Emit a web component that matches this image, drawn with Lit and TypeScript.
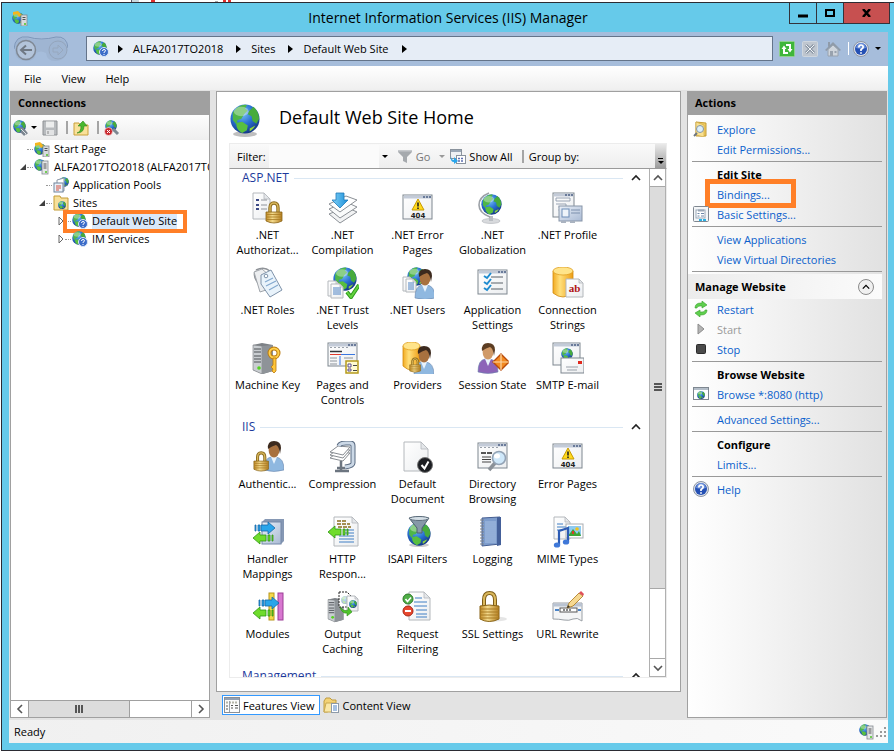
import { LitElement, html, svg, css, nothing } from "lit";
import { customElement } from "lit/decorators.js";

/* ---------- shared drawing parts ---------- */
const globe = (x: number, y: number, s: number) => svg`
  <g transform="translate(${x} ${y}) scale(${s / 32})">
    <circle cx="16" cy="16" r="15.5" fill="url(#sea)"/>
    <path d="M3 9C7 3 13 0 18 1l-2 4 3 2-4 4-3 5-4 1-1 5-4-5z" fill="#4fb648"/>
    <path d="M20 8l5-5c4 3 6 8 6 13l-3 5-4-3-1-5-4-2z" fill="#46ab3c"/>
    <path d="M7 20l6-1 6 4-1 5-5 3C9 29 6 25 7 20z" fill="#58bf3f"/>
    <path d="M21 26l6-3c-2 4-4 5-6 6z" fill="#8fd43c"/>
    <ellipse cx="12" cy="8" rx="8" ry="5" fill="#fff" opacity=".35"/>
  </g>`;
const lock = (x: number, y: number, s: number) => svg`
  <g transform="translate(${x} ${y}) scale(${s / 22})">
    <path d="M5 11V6q0-5 4-5t4 5v5" fill="none" stroke="#8a6a1c" stroke-width="3.4"/>
    <path d="M5 11V6q0-5 4-5t4 5v5" fill="none" stroke="#d9b75c" stroke-width="1.4"/>
    <path d="M1 10h16v9q-8 4-16 0z" fill="url(#brass)" stroke="#8a6518" stroke-width=".8"/>
    <path d="M2 12.500h14M2 15h14M2 17.500h14" stroke="#a87b22" stroke-width=".8"/>
  </g>`;
const person = (x: number, y: number, body = "#8fb8e0", hair = "#3c2a1e", skin = "#a8713f") => svg`
  <g transform="translate(${x} ${y})">
    <path d="M0 29q0-12 7-13h5q8 1 8 13-10 3-20 0z" fill="${body}" stroke="#6b86ac" stroke-width=".6"/>
    <path d="M7 16l3 7 3-7z" fill="#e9f3fc"/>
    <ellipse cx="10" cy="9" rx="5.400" ry="7.500" fill="${skin}"/>
    <path d="M4 8Q3 0 10 0t7 7l-1 6q-1-8-4-9-4 1-8 4z" fill="${hair}"/>
  </g>`;
const page = (x: number, y: number, w: number, h: number, f = 6) => svg`
  <path d="M${x} ${y}h${w - f}l${f} ${f}v${h - f}h${-w}z" fill="url(#paper)" stroke="#b4b8bc" stroke-width="1"/>
  <path d="M${x + w - f} ${y}v${f}h${f}z" fill="#e4e7ea" stroke="#b4b8bc" stroke-width=".8"/>`;
const win = (x: number, y: number, w: number, h: number) => svg`
  <rect x="${x}" y="${y}" width="${w}" height="${h}" fill="url(#paper)" stroke="#7e8790"/>
  <path d="M${x + 1} ${y + 2}h${w - 2}" stroke="#c3cbd8" stroke-width="3"/>
  <path d="M${x + w - 9} ${y + 2}h8" stroke="#4d6285" stroke-width="1.500" stroke-dasharray="2 1"/>`;
const lines = (x: number, y: number, w: number, n: number, gap: number, c: string) =>
  Array.from({ length: n }, (_, i) => svg`<path d="M${x} ${y + i * gap}h${w}" stroke="${c}" stroke-width="1"/>`);
const server = (x: number, y: number, s: number) => svg`
  <g transform="translate(${x} ${y}) scale(${s / 31})">
    <path d="M0 2l9-2 11 2v26l-10 3-10-4z" fill="#7d8186"/>
    <path d="M0 2l9 1v28l-9-4z" fill="#c9cdd1" stroke="#73777c" stroke-width=".6"/>
    <path d="M9 3l11-1v26l-11 3z" fill="#8e9398"/>
    <path d="M1 6h7M1 9h7M1 13h7M1 16h7M1 19h7" stroke="#4c5055" stroke-width="1.200"/>
    <circle cx="6" cy="25" r="1.800" fill="#55d321"/>
  </g>`;
const cylinder = (x: number, y: number, w: number, h: number) => svg`
  <path d="M${x} ${y + 4}v${h - 8}q${w / 2} 8 ${w} 0v${8 - h}z" fill="url(#gold)" stroke="#d08a10" stroke-width=".8"/>
  <ellipse cx="${x + w / 2}" cy="${y + 4}" rx="${w / 2}" ry="4" fill="#ffe48a" stroke="#dfa021" stroke-width=".8"/>`;
const arrowR = (x: number, y: number) => svg`
  <path d="M${x} ${y + 3}h1v6h-1zM${x + 3} ${y + 3}h2v6h-2zM${x + 6} ${y + 3}h7V${y}l7 6-7 6v-3h-7z" fill="#2aa5ea" stroke="#1668a8" stroke-width=".8"/>`;
const arrowL = (x: number, y: number) => svg`
  <path d="M${x + 19} ${y + 3}h1v6h-1zM${x + 15} ${y + 3}h2v6h-2zM${x + 13} ${y + 3}H${x + 7}V${y}l-7 6 7 6v-3h6z" fill="#6fdc2c" stroke="#2f9614" stroke-width=".8"/>`;
const error404 = svg`
  ${win(1, 3, 29, 24)}
  <path d="M16 7l6 11H10z" fill="#ffd91c" stroke="#c79a00"/>
  <path d="M16 10.500v4M16 15.500v1.500" stroke="#222" stroke-width="1.600"/>
  <text x="16" y="26" font-size="7" font-weight="bold" font-family="'DejaVu Sans', sans-serif" text-anchor="middle" fill="#222">404</text>`;

/* ---------- 32px feature icons ---------- */
const features: Record<string, unknown> = {
  authz: svg`${page(1, 1, 17, 26)}
    <path d="M4 8h3M4 13h3M4 17h3" stroke="#3c4a86" stroke-width="2"/><path d="M9 8h6M9 13h6M9 17h6" stroke="#8f949b"/>
    ${lock(13, 10, 22)}`,
  compilation: svg`
    <path d="M2 22l17-7 11 5-17 11z" fill="#f2f3f4" stroke="#8b9096"/>
    <path d="M2 17l17-7 11 5-17 11z" fill="#fafbfb" stroke="#8b9096"/>
    <path d="M2 12l17-8 11 4-17 12z" fill="#fff" stroke="#8b9096"/>
    <path d="M9 1h8v7h4l-8 8-8-8h4z" fill="url(#azure)" stroke="#1f78b8" stroke-width=".8"/>`,
  error404,
  globalization: svg`
    <ellipse cx="14" cy="29" rx="9" ry="2.500" fill="#d8dadd" stroke="#aeb2b7" stroke-width=".6"/>
    <path d="M12 24h4v5h-4z" fill="#b9bdc2"/>
    <path d="M12 1Q2 5 2 13t11 12" fill="none" stroke="#9ba0a6" stroke-width="1.600"/>
    ${globe(4, 2, 21)}`,
  profile: svg`${win(1, 1, 21, 24)}
    <path d="M4 6h14v3H4zM4 12h10v12" fill="none" stroke="#98a3b3"/><path d="M6 15h6M6 18h4" stroke="#c0c7d0"/>
    <rect x="7" y="14" width="23" height="15" fill="url(#steel)" stroke="#8895a8"/>
    <rect x="10" y="17" width="7" height="8" fill="#eef4fa" stroke="#6c8db8"/>
    <path d="M19 18h9M19 21h9" stroke="#7d90ad"/><path d="M9 30h5M18 30h5" stroke="#aab3c0" stroke-width="2"/>`,
  roles: svg`
    <path d="M4 3q8-4 14 1M4 4q-4 4 2 12" fill="none" stroke="#8f9398" stroke-width="1.500"/>
    <path d="M2 5l8-3 7 6-3 15-6 2z" fill="#eceef0" stroke="#a0a5ab"/>
    <path d="M9 8l10-5 11 20-12 7-9-13z" fill="#e9f3fb" stroke="#7f93aa"/>
    <circle cx="14" cy="9" r="1.800" fill="#fff" stroke="#7f93aa"/>
    <path d="M13 15l8-4M14 19l10-5M17 23l9-5" stroke="#84a9cf" stroke-width="1.200"/>`,
  trust: svg`${globe(6, 0, 24)}${page(1, 14, 11, 15, 3)}${page(4, 17, 12, 14, 3)}
    ${lines(6, 21, 8, 4, 2, "#4c82c4")}
    <path d="M20 25l4 5 8-12" fill="none" stroke="#2c9a1b" stroke-width="4"/><path d="M20 25l4 5 8-12" fill="none" stroke="#64d23f" stroke-width="2"/>`,
  users: svg`${globe(5, 0, 19)}${page(1, 10, 10, 14, 3)}${page(4, 12, 10, 13, 3)}
    ${lines(6, 16, 6, 4, 2, "#4c82c4")}${person(13, 2)}`,
  appsettings: svg`${win(1, 3, 29, 24)}
    ${[9, 15, 21].map((y) => svg`<path d="M7 ${y}l3 2 4-5" fill="none" stroke="#1d8bd0" stroke-width="2"/><path d="M14 ${y + 1}h12" stroke="#596069"/>`)}`,
  connstrings: svg`${cylinder(1, 0, 20, 30)}${page(14, 12, 17, 18, 4)}
    <text x="22.500" y="25" font-size="11" font-weight="bold" font-family="'Liberation Serif', serif" text-anchor="middle" fill="#b01212">ab</text>`,
  machinekey: svg`${server(1, 1, 31)}
    <circle cx="22" cy="11" r="4.500" fill="none" stroke="#b97a10" stroke-width="4"/><circle cx="22" cy="11" r="4.500" fill="none" stroke="#ffcf4a" stroke-width="2"/>
    <path d="M21 16h3v13l-2 2-2-2 1-2-2-2 2-2z" fill="#ffc63a" stroke="#b97a10" stroke-width=".8"/>`,
  pages: svg`${win(1, 1, 29, 23)}
    <path d="M3 5.500h20" stroke="#9aa1aa" stroke-dasharray="2 2"/>
    <path d="M3 9.500h12" stroke="#2f3338" stroke-width="1.500"/><path d="M3 12.500h12" stroke="#e03a2e"/><path d="M14 12.500h14" stroke="#3977e0"/>
    <path d="M3 16h7M3 19h7M3 22h7M17 16h9" stroke="#8d949c"/><path d="M13 14v9" stroke="#3977e0"/>
    <rect x="19" y="19" width="12" height="12" fill="#fffbd0" stroke="#b59a1c" stroke-width="1.500"/>
    <path d="M21 22h3v3h-3zM21 27h3v2h-3z" fill="#fff" stroke="#5b4a8c"/><path d="M26 23.500h4M26 28.500h4" stroke="#444"/>`,
  providers: svg`${cylinder(1, 0, 17, 28)}${person(12, 4)}${lock(7, 16, 15)}`,
  session: svg`${person(1, 1, "#8c63b8", "#5c3d22", "#d09a68")}
    <path d="M24 12l8 8-8 8-8-8z" fill="#f28a22" stroke="#b84a0a" stroke-width="1.400"/>
    <path d="M24 12v16M16 20h16" stroke="#fbd7a8" stroke-width="1.200"/>`,
  smtp: svg`${win(1, 1, 27, 22)}${globe(9, 6, 12)}
    <rect x="9" y="16" width="23" height="15" fill="url(#paper)" stroke="#7e8790"/>
    <path d="M14 25h12M15 28h10" stroke="#9aa1aa"/><rect x="26" y="19" width="4" height="3" fill="#e0281c"/>`,
  authn: svg`${person(12, 0)}${lock(1, 11, 20)}`,
  compression: svg`
    <path d="M3 17l8-6 12 1-7 8z" fill="#fff" stroke="#878c92"/><path d="M3 14l8-6 12 1-7 8z" fill="#fff" stroke="#878c92"/><path d="M3 11l8-6 12 1-7 8z" fill="#fff" stroke="#878c92"/>
    <path d="M12 5q1-3 7-3h4q3 0 3 3v17q0 3-8 4" fill="none" stroke="#596a80" stroke-width="5"/>
    <path d="M12 5q1-3 7-3h4q3 0 3 3v17q0 3-8 4" fill="none" stroke="#cbd8e6" stroke-width="3"/>
    <path d="M14 20v10M8 30h14M10 27h8" stroke="#6c7580" stroke-width="2.500"/>`,
  defaultdoc: svg`${page(2, 1, 24, 29, 7)}
    <circle cx="23" cy="24" r="7.500" fill="#1c1e22" stroke="#777"/><path d="M19.500 24l3 3.500 4-7" fill="none" stroke="#fff" stroke-width="2"/>`,
  directory: svg`${win(1, 2, 29, 25)}
    <path d="M3 6.500h20" stroke="#9aa1aa" stroke-dasharray="2 2"/>
    <path d="M4 12h12" stroke="#222" stroke-width="1.500" stroke-dasharray="5 1"/><path d="M5 16h9M5 18.500h9M5 21h9" stroke="#444"/>
    <path d="M18 22l-6 7" stroke="#8b9198" stroke-width="3.500"/>
    <circle cx="22" cy="17" r="6.500" fill="#cfe8fa" stroke="#93a3b5" stroke-width="1.600"/><ellipse cx="20" cy="15" rx="3" ry="2.500" fill="#fff"/>`,
  handler: svg`
    <path d="M10 6l3-3h19v22l-3 3H10z" fill="#8698b4"/><rect x="10" y="6" width="19" height="22" fill="url(#steel)" stroke="#7588a8"/>
    ${arrowR(3, 6)}${arrowL(1, 16)}`,
  response: svg`${page(7, 1, 24, 29, 6)}
    <path d="M10 5h10M10 8h13M11 11h13" stroke="#8a6d1e" stroke-width="1.500" stroke-dasharray="4 1"/>
    <path d="M18 14h9M18 17h9M12 20h15M12 23h15M12 26h15" stroke="#3f7fc4"/>${arrowL(1, 10)}`,
  isapi: svg`<ellipse cx="17" cy="29" rx="10" ry="2" fill="#000" opacity=".2"/>${globe(5, 6, 24)}
    <path d="M7 2q10-3 20 0l-7 10v5h-5v-5z" fill="#8698a8" stroke="#4f6070"/><ellipse cx="17" cy="2.500" rx="9.500" ry="2" fill="#d5dfe6" stroke="#5d6d7b"/>`,
  logging: svg`
    <path d="M5 2l18-1v27l-18 2z" fill="#7d9ccc" stroke="#465f92"/><path d="M20 1h4v28l-4 1z" fill="#44609a"/>
    ${lines(8, 6, 11, 11, 2, "#a9c1e4")}
    <path d="M3 4h4M3 7h4M3 10h4M3 13h4M3 16h4M3 19h4M3 22h4M3 25h4M3 28h4" stroke="#7c828a" stroke-width="1.200"/>`,
  mime: svg`${page(2, 1, 16, 22, 5)}<path d="M5 8h6M5 11h9M5 14h6" stroke="#3f7fc4"/>
    <rect x="14" y="8" width="17" height="14" fill="#fff" stroke="#a9adb2"/><rect x="16" y="10" width="13" height="10" fill="#8ecbf2"/>
    <path d="M16 20l5-7 4 5 2-3 2 5z" fill="#3fa534"/><circle cx="25" cy="13" r="1.800" fill="#f2c21c"/><path d="M20 15h2v3h-2z" fill="#d83a2a"/>
    <path d="M7 29V15l9-3v14" fill="none" stroke="#2c5bb4" stroke-width="2.200"/><ellipse cx="5" cy="29" rx="3.200" ry="2.600" fill="#3f78d8"/><ellipse cx="14" cy="26" rx="3.200" ry="2.600" fill="#3f78d8"/>`,
  modules: svg`
    <rect x="17" y="2" width="5" height="27" fill="#f5d94a" stroke="#b8961a"/><rect x="26" y="2" width="5" height="27" fill="#d877d0" stroke="#9c3f96"/>
    ${arrowR(7, 6)}${arrowL(1, 16)}`,
  caching: svg`${server(1, 7, 24)}
    <path d="M12 1h8l5 5v10H12z" fill="#fff" stroke="#222" stroke-dasharray="2 1"/><g opacity=".4">${globe(14, 5, 8)}</g>
    ${page(20, 5, 11, 15, 3)}${globe(22, 9, 8)}
    <path d="M13 16q4 5 8 3v-3l4 5-5 4v-3q-5 1-7-6z" fill="#4fc52b" stroke="#2d8a16" stroke-width=".6"/>`,
  request: svg`${page(7, 1, 21, 28, 6)}<path d="M13 7h7M12 11h13M12 15h13M14 19h11M14 23h11M14 26h11" stroke="#3f7fc4"/>
    <circle cx="6" cy="8" r="5" fill="#4fae47" stroke="#2d7a28"/><path d="M3.500 8l2 2.500 3.500-4" fill="none" stroke="#fff" stroke-width="1.600"/>
    <circle cx="6" cy="20" r="5" fill="#e8482e" stroke="#a82414"/><path d="M3 20h6" stroke="#fff" stroke-width="2"/>`,
  ssl: svg`<ellipse cx="18" cy="28" rx="12" ry="2.500" fill="#000" opacity=".1"/>
    <path d="M7 17V9q0-7 5.500-7T18 9v8" fill="none" stroke="#7d5c18" stroke-width="4"/><path d="M7 17V9q0-7 5.500-7T18 9v8" fill="none" stroke="#d9b75c" stroke-width="2"/>
    <path d="M3 15q9-2 19 0v13q-10 5-19 0z" fill="url(#brass)" stroke="#8a6518"/><path d="M3 18h19M3 21h19M3 24h19M3 27h19" stroke="#a87b22"/>`,
  rewrite: svg`
    <path d="M1 12h29v18q-5-4-9-2t-9 1-11-1z" fill="#f4f5f6" stroke="#9a9fa5"/><path d="M1 14h29" stroke="#b9c3d2" stroke-width="3"/>
    <rect x="8" y="17" width="17" height="4" fill="#fff" stroke="#555"/><path d="M11 19h9" stroke="#111" stroke-dasharray="2 1"/>
    <path d="M3 19h4M26 19h3" stroke="#4a84c8" stroke-width="2"/>
    <path d="M15 17l2-5 10-10 4 3-10 10z" fill="#f6d890" stroke="#a8761a" stroke-width=".8"/><path d="M27 2l2-2 3 3-1 2z" fill="#e0505a"/><path d="M15 17l1-3 2 2z" fill="#333"/>`,
};

/* ---------- 16px icons ---------- */
const small: Record<string, unknown> = {
  siteglobe: svg`${globe(0, 0, 14)}<circle cx="11" cy="11" r="4.500" fill="#3b6cc8" stroke="#dce8f8"/>
    <path d="M9.500 10q0-1.500 1.500-1.500t1.500 1.300q0 .8-1.500 1.500v.7M11 13v1" fill="none" stroke="#fff"/>`,
  iis: svg`${globe(0, 2, 12)}<path d="M1 2l5-1 4 4-3 2-2-3-4 1z" fill="#f5b51e"/>
    <rect x="9" y="5" width="6" height="11" fill="#d8dbde" stroke="#84898f" stroke-width=".8"/><path d="M10.500 7.500h3M10.500 9.500h3" stroke="#555"/><circle cx="13" cy="14" r="1" fill="#4cc422"/>`,
  host: svg`${globe(0, 0, 12)}<rect x="8" y="2" width="6" height="13" fill="#e4e6e8" stroke="#84898f" stroke-width=".8"/><path d="M9.500 5h3M9.500 7h3M9.500 9h3" stroke="#555"/><circle cx="12" cy="13" r="1" fill="#4cc422"/>`,
  pools: svg`${globe(6, 0, 10)}<path d="M4 3l7-2v13H4z" fill="#fff" stroke="#8b97a6"/><rect x="1" y="6" width="9" height="9" fill="#eaf2fa" stroke="#71839a"/><path d="M3 9h5M3 11h5M3 13h3" stroke="#d5503e"/>`,
  folder: svg`<path d="M1 1h6l1 2h7v12H1z" fill="#f7e09a" stroke="#c39b35"/>${globe(5, 6, 8)}`,
  connect: svg`${globe(0, 0, 13)}<path d="M7 8l3 1 4 5M8 11l4 4" fill="none" stroke="#7d8791" stroke-width="2.500"/><path d="M8 9l5 5" stroke="#dfe4e8"/>`,
  save: svg`<path d="M1 1h14v14H1z" fill="#b8bbbe" stroke="#8e9194"/><rect x="4" y="1.500" width="8" height="6" fill="#eceded"/><rect x="4" y="10" width="8" height="5" fill="#e2e3e4"/><path d="M6 11v3" stroke="#888"/>`,
  upfolder: svg`<path d="M1 3h5l1 2h8v10H1z" fill="#f9e19a" stroke="#c9a03a"/><path d="M4 13q4-1 4-7H5l5-5 4 5h-3q0 7-7 7z" fill="#49b82f" stroke="#2b851a" stroke-width=".6"/>`,
  disconnect: svg`${globe(1, 0, 12)}<path d="M9 9l5 5" stroke="#7d8791" stroke-width="3"/><circle cx="4.500" cy="11.500" r="4" fill="#c9282e" stroke="#fff" stroke-width=".6"/><path d="M3 10l3 3M6 10l-3 3" stroke="#fff"/>`,
  refresh: svg`<rect x=".5" y=".5" width="15" height="15" rx="1" fill="#3fb63b" stroke="#8fd08d"/><path d="M2.500 8L5 4.500 7.500 8H6v3h3v2H4V8zM13.500 8L11 11.500 8.500 8H10V5H7V3h5v5z" fill="#fff"/>`,
  stopload: svg`<rect x=".5" y=".5" width="15" height="15" rx="1" fill="#bfc6cf" stroke="#cfd6de"/><path d="M4 4l8 8M12 4l-8 8" stroke="#8b97a5" stroke-width="3"/><path d="M4 4l8 8M12 4l-8 8" stroke="#f0f3f6"/>`,
  home: svg`<path d="M0 9l8-8 8 8-1.500 1L8 4l-6.500 6z" fill="#8f9ba9"/><path d="M3 8.500L8 4l5 4.500V15H3z" fill="#cfd5dc" stroke="#98a2ae"/><path d="M5 10h3v5H5zM9.500 10h2v2h-2z" fill="#98a2ae"/><path d="M3 1h2v4l-2 1z" fill="#8f9ba9"/>`,
  help: svg`<circle cx="8" cy="8" r="7.500" fill="#dfe3ea" stroke="#8c95a5"/><circle cx="8" cy="8" r="6" fill="#2450b4"/><path d="M3 7q1-5 5-5t5 5q-5 1-10 0z" fill="#6d92dc"/>
    <path d="M5.800 6.500Q6 4 8 4t2.200 2q0 1.200-2.200 2.500V10M8 11.200v1.600" fill="none" stroke="#fff" stroke-width="1.700"/>`,
  explore: svg`<path d="M3 1l10 1v13H3z" fill="#f2cd62" stroke="#c39b35"/><path d="M3 1l8 3v12l-8-2z" fill="#fae190" stroke="#c9a542" stroke-width=".6"/><path d="M4 12l-3 3" stroke="#6d7680" stroke-width="2"/><circle cx="7" cy="8" r="3.500" fill="#dceffb" stroke="#8595a5"/>`,
  basic: svg`<rect x=".5" y=".5" width="15" height="15" rx="1" fill="#f4f6f8" stroke="#7f8790"/><rect x="3" y="4" width="9" height="8" fill="#fff" stroke="#9aa7b6"/><path d="M5 4.500h6" stroke="#9aa7b6" stroke-width="2"/><path d="M4.500 7.500h2M4.500 10h2M8 7.500h3M8 10h3" stroke="#6d87a8"/><path d="M6 14h8" stroke="#2bb1e6" stroke-width="2" stroke-dasharray="3 1"/>`,
  restart: svg`<path d="M2 7q0-5 6-5h1V0l5 4-5 3V5H7Q4 5 4 7zM14 9q0 5-6 5H7v2l-5-4 5-3v2h2q3 0 3-2z" fill="#5fcf4e" stroke="#37a02a" stroke-width=".6"/>`,
  start: svg`<path d="M5 3l6 5-6 5z" fill="#b4b4b4" stroke="#8c8c8c"/>`,
  stop: svg`<rect x="3.500" y="3.500" width="9" height="9" rx="1" fill="#4a4a4a" stroke="#2c2c2c"/>`,
  browse: svg`<rect x=".5" y="1.500" width="15" height="12" fill="#fff" stroke="#7e8790"/><path d="M1 3h14" stroke="#b4bec9" stroke-width="2"/>${globe(4, 5, 8)}`,
  showall: svg`<rect x=".5" y="1.500" width="11" height="9" fill="#eef1f4" stroke="#8a939d"/><path d="M1 3h10" stroke="#9aa7b6" stroke-width="2"/><rect x="6.500" y="7.500" width="9" height="8" fill="#fff" stroke="#8a939d"/><path d="M8 10.500h6M8 13h6" stroke="#5e6fb0" stroke-width="1.500" stroke-dasharray="2 1"/><path d="M1 8q0 4 3 4V9l4 4-4 3v-2q-4 0-3-6z" fill="#2aa5ea"/>`,
  funnel: svg`<path d="M1 2h14v2l-5 5v6l-4-2V9L1 4z" fill="#a5a9ad"/><path d="M1 2h14v1.500H1z" fill="#c6c9cc"/>`,
  features: svg`<rect x=".5" y=".5" width="15" height="15" fill="#fbfbfb" stroke="#8a8f95"/><path d="M1 2h14" stroke="#93a0b2" stroke-width="2"/><path d="M2 5.500h12" stroke="#b5b5a8" stroke-width="2" stroke-dasharray="2 1"/><path d="M5.500 4v11" stroke="#9aa0a7"/><path d="M7 8.500h2M7 11h2M11 8.500h3M11 11h3M2 9h2M2 12h2" stroke="#555"/>`,
  content: svg`<path d="M1 4l2-3h4l2 2h4v9l-9 3H1z" fill="#f3d275" stroke="#bf9b40"/><path d="M3 6h10l-2 9H1z" fill="#fae7a6" stroke="#c9a950"/><rect x="8.500" y="6.500" width="7" height="9" fill="#fff" stroke="#8d9aa8"/><path d="M10 9h4M10 11h4M10 13h4" stroke="#4c82c4"/>`,
};

const icon = (name: string) => html`<svg class="i16" viewBox="0 0 16 16" aria-hidden="true">${small[name]}</svg>`;
const chevron = (d: string) => html`<svg class="chev" viewBox="0 0 10 10" aria-hidden="true"><path d=${d} fill="none" stroke="currentColor" stroke-width="1.600"/></svg>`;
const UP = "M1 7l4-4 4 4", DOWN = "M1 3l4 4 4-4", LEFT = "M7 1L3 5l4 4", RIGHT = "M3 1l4 4-4 4";

const groups = [
  { title: "ASP.NET", items: [
    ["authz", ".NET", "Authorizat..."], ["compilation", ".NET", "Compilation"], ["error404", ".NET Error", "Pages"], ["globalization", ".NET", "Globalization"], ["profile", ".NET Profile"],
    ["roles", ".NET Roles"], ["trust", ".NET Trust", "Levels"], ["users", ".NET Users"], ["appsettings", "Application", "Settings"], ["connstrings", "Connection", "Strings"],
    ["machinekey", "Machine Key"], ["pages", "Pages and", "Controls"], ["providers", "Providers"], ["session", "Session State"], ["smtp", "SMTP E-mail"] ] },
  { title: "IIS", items: [
    ["authn", "Authentic..."], ["compression", "Compression"], ["defaultdoc", "Default", "Document"], ["directory", "Directory", "Browsing"], ["error404", "Error Pages"],
    ["handler", "Handler", "Mappings"], ["response", "HTTP", "Respon..."], ["isapi", "ISAPI Filters"], ["logging", "Logging"], ["mime", "MIME Types"],
    ["modules", "Modules"], ["caching", "Output", "Caching"], ["request", "Request", "Filtering"], ["ssl", "SSL Settings"], ["rewrite", "URL Rewrite"] ] },
  { title: "Management", items: [] as string[][] },
];

type Action = { kind: "link" | "off" | "head" | "rule" | "bar"; text?: string; icon?: string; marked?: boolean };
const actions: Action[] = [
  { kind: "link", text: "Explore", icon: "explore" }, { kind: "link", text: "Edit Permissions..." }, { kind: "rule" },
  { kind: "head", text: "Edit Site" }, { kind: "link", text: "Bindings...", marked: true }, { kind: "link", text: "Basic Settings...", icon: "basic" }, { kind: "rule" },
  { kind: "link", text: "View Applications" }, { kind: "link", text: "View Virtual Directories" }, { kind: "rule" },
  { kind: "bar", text: "Manage Website" },
  { kind: "link", text: "Restart", icon: "restart" }, { kind: "off", text: "Start", icon: "start" }, { kind: "link", text: "Stop", icon: "stop" }, { kind: "rule" },
  { kind: "head", text: "Browse Website" }, { kind: "link", text: "Browse *:8080 (http)", icon: "browse" }, { kind: "rule" },
  { kind: "link", text: "Advanced Settings..." }, { kind: "rule" },
  { kind: "head", text: "Configure" }, { kind: "link", text: "Limits..." }, { kind: "rule" },
  { kind: "link", text: "Help", icon: "help" },
];

const tree = [
  { text: "Start Page", icon: "iis", level: 0, arrow: "" },
  { text: "ALFA2017TO2018 (ALFA2017TO2018\\Administrator)", icon: "host", level: 0, arrow: "open" },
  { text: "Application Pools", icon: "pools", level: 1, arrow: "" },
  { text: "Sites", icon: "folder", level: 1, arrow: "open" },
  { text: "Default Web Site", icon: "siteglobe", level: 2, arrow: "closed", marked: true },
  { text: "IM Services", icon: "siteglobe", level: 2, arrow: "closed" },
];

@customElement("app-root")
export class AppRoot extends LitElement {
  static styles = css`
    :host { display: block; font: 11px/15px "Open Sans", "Noto Sans", sans-serif; color: #000; }
    * { box-sizing: border-box; }
    button { font: inherit; color: inherit; border: 0; padding: 0; margin: 0; background: none; }
    a { color: inherit; text-decoration: none; }
    ul { list-style: none; margin: 0; padding: 0; }
    svg { display: block; flex: none; }
    .defs { position: absolute; width: 0; height: 0; }
    .i16 { width: 16px; height: 16px; }
    .chev { width: 10px; height: 10px; }
    .shell { height: 100vh; min-height: 560px; display: flex; flex-direction: column; background: #fff; padding: 0 0 0 1px; }
    .behind { width: 240px; height: 2px; }
    .window { flex: 1; min-height: 0; display: flex; flex-direction: column; background: #66caea; border: 1px solid #2b2b33; border-right: 0; padding: 0 6px 7px 7px; }

    .title { display: flex; height: 29px; flex: none; align-items: center; position: relative; padding-left: 3px; }
    .title h1 { flex: 1; margin: 0; text-align: center; font-size: 14px; line-height: 20px; font-weight: 400; padding-left: 79px; }
    .controls { display: flex; align-self: flex-start; height: 21px; border: 1px solid #33333b; border-top: 0; margin-right: -2px; }
    .controls button { width: 27px; display: grid; place-items: center; border-right: 1px solid #33333b; }
    .controls .close { width: 45px; background: #c75050; border: 0; }

    .client { flex: 1; min-height: 0; display: flex; flex-direction: column; background: #e3e3e3; }
    .address { flex: none; height: 34px; display: flex; align-items: center; background: #a6bddb; padding: 0 7px 1px 5px; }
    .navs { width: 54px; height: 26px; margin-right: 18px; }
    .crumbs { flex: 1; min-width: 0; height: 25px; display: flex; align-items: center; gap: 8px; border: 1px solid #64748a; background: #e6edf6; padding-left: 6px; white-space: nowrap; font-size: 11px; }
    .tri { width: 0; height: 0; border: 4px solid transparent; border-left: 5px solid #000; border-right: 0; margin: 0 2px 0 5px; }
    .tri:first-of-type { margin-left: 1px; }
    .caret { width: 0; height: 0; border: 3px solid transparent; border-top: 3px solid #000; border-bottom: 0; flex: none; }
    .caret.off { border-top-color: #999; }
    .tools { display: flex; align-items: center; gap: 7px; margin-left: 6px; }
    .tools .sep { width: 1px; height: 13px; background: #fff; margin-right: -3px; }
    .tools .drop { display: flex; align-items: center; gap: 6px; }
    .menu { flex: none; height: 24px; display: flex; align-items: center; gap: 20px; padding-left: 15px; background: linear-gradient(#fff, #efefef); }

    .main { flex: 1; min-height: 0; display: grid; grid-template-columns: 200px minmax(0, 1fr) 200px; gap: 6px; padding: 1px 1px 0 1px; }
    .panel { min-height: 0; display: flex; flex-direction: column; border: 1px solid #a0a0a0; border-top: 0; }
    .head { flex: none; height: 24px; margin: 0; background: #a0a0a0; font-size: 11px; line-height: 24px; font-weight: 700; padding-left: 7px; }

    .tbar { flex: none; height: 25px; display: flex; align-items: center; gap: 5px; padding-left: 2px; background: linear-gradient(#fdfdfd, #eee); }
    .tbar .split { display: flex; align-items: center; gap: 2px; }
    .tbar .sep, .filter .sep { width: 2px; height: 13px; background: #a5a5a5; }
    .tbar .sep { margin-left: 3px; }
    .tree { flex: 1; min-height: 0; overflow: hidden; background: #fff; }
    .node { position: relative; height: 18px; display: flex; align-items: center; gap: 4px; white-space: nowrap; padding-left: 8px; }
    .lvl1 { padding-left: 27px; }
    .lvl2 { padding-left: 46px; }
    .twist { width: 8px; height: 8px; }
    .node .dots { flex: none; width: 6px; margin-left: -4px; border-top: 1px dotted #999; }
    .node .i16 { margin-left: -3px; }
    .node a { line-height: 16px; }
    .node.marked a { background: #d9e8f9; }
    .node .ring { position: absolute; left: 52px; top: -2px; width: 124px; height: 23px; border: 4px solid #ff7f27; }
    .hscroll { flex: none; height: 17px; display: flex; background: #fff; border-top: 1px solid #a0a0a0; color: #555; }
    .hscroll button { width: 17px; display: grid; place-items: center; }
    .hscroll .thumb { width: 102px; background: #dcdcdc; border: solid #a0a0a0; border-width: 0 1px; }
    .hscroll .gap { flex: 1; border-right: 1px solid #a0a0a0; }

    .centre { min-height: 0; display: flex; flex-direction: column; }
    .home { flex: 1; min-height: 0; display: flex; flex-direction: column; background: #fff; border: 1px solid #a0a0a0; padding: 11px 13px 13px 12px; }
    .banner { flex: none; display: flex; align-items: flex-start; gap: 18px; height: 40px; }
    .banner h2 { margin: 0; font-size: 18px; line-height: 28px; font-weight: 400; white-space: nowrap; }
    .banner svg { width: 32px; height: 35px; }
    .filter { flex: none; height: 26px; display: flex; align-items: center; gap: 3px; border: 1px solid #ececec; border-bottom: 1px solid #9a9a9a; background: linear-gradient(#fafafa, #eee); padding-left: 7px; white-space: nowrap; }
    .filter input { width: 110px; height: 23px; border: 0; padding: 0 4px; font: inherit; background: #fbfbfb; outline: 0; }
    .filter button { display: flex; align-items: center; gap: 3px; }
    .filter .go { color: #777; margin-left: 6px; }
    .filter .pre { margin: 0 2px 0 6px; }
    .filter .more { align-self: stretch; width: 11px; margin-left: auto; background: linear-gradient(#e9e9e9, #9c9c9c); flex-direction: column; justify-content: flex-end; gap: 2px; padding-bottom: 4px; }
    .more i { width: 5px; height: 1px; background: #000; }
    .listbox { flex: 1; min-height: 0; display: flex; border: 1px solid #ececec; border-top: 0; }
    .list { flex: 1; min-width: 0; overflow: hidden; }
    .group { display: flex; align-items: center; gap: 5px; height: 18px; margin: 0; padding: 0 8px 0 12px; color: #1c3a9c; font-size: 12px; line-height: 18px; font-weight: 400; }
    .group i { flex: 1; height: 1px; background: #dae7f3; margin-right: 3px; }
    .group .chev { color: #222; }
    .grid { display: grid; grid-template-columns: repeat(auto-fill, 75px); grid-auto-rows: 75px; margin-bottom: 6px; }
    .grid a { display: flex; flex-direction: column; align-items: center; padding-top: 5px; white-space: nowrap; text-align: center; }
    .grid svg { width: 32px; height: 32px; margin-bottom: 3px; }
    .vscroll { width: 17px; flex: none; display: flex; flex-direction: column; border: 1px solid #b0b0b0; border-top: 0; color: #555; }
    .vscroll button { height: 17px; display: grid; place-items: center; }
    .vscroll .thumb { flex: 404; display: grid; place-items: center; background: #dcdcdc; border: solid #a8a8a8; border-width: 1px 0; }
    .vscroll .gap { flex: 70; border-bottom: 1px solid #a8a8a8; }
    .grip { width: 8px; height: 8px; background: repeating-linear-gradient(#555 0 2px, transparent 2px 3px); }
    .grip.side { background: repeating-linear-gradient(90deg, #555 0 2px, transparent 2px 3px); }
    .tabs { flex: none; display: flex; align-items: center; height: 26px; padding: 3px 0 3px 6px; gap: 3px; }
    .tabs button { display: flex; align-items: center; gap: 3px; height: 20px; white-space: nowrap; }
    .tabs .on { background: #fff; border: 1px solid #3399ff; padding: 0 5px 0 1px; }

    .actions { flex: 1; background: linear-gradient(90deg, #fff, #e1e1e1); padding-top: 4px; }
    .act { position: relative; display: flex; align-items: center; height: 20px; padding-left: 5px; gap: 8px; color: #0a5fcc; white-space: nowrap; }
    .act.off { color: #9a9a9a; }
    .act.head2 { color: #000; font-weight: 700; margin: 0; font-size: 11px; }
    .act .slot { width: 16px; flex: none; }
    .act .ring { position: absolute; left: 17px; top: -5px; width: 91px; height: 29px; border: 5px solid #ff7f27; }
    .rule { height: 1px; margin: 2px 4px 2px 4px; background: #999; }
    .bar { display: flex; align-items: center; justify-content: space-between; height: 25px; margin: 0 4px 0 0; padding: 0 8px 0 7px; background: linear-gradient(90deg, #ececec, #fbfbfb); font-weight: 700; }
    .bar h3 { margin: 0; font-size: 11px; line-height: 24px; }
    .bar button { width: 16px; height: 16px; border: 1px solid #8a8a8a; border-radius: 50%; background: #f0f0f0; display: grid; place-items: center; }
    .bar .chev { width: 8px; height: 8px; }
    .status { flex: none; height: 23px; margin-top: 2px; display: flex; align-items: center; justify-content: space-between; padding: 0 2px 0 5px; background: linear-gradient(90deg, #f0f0f0, #fafafa); }
    .status span { display: flex; align-items: center; gap: 1px; }
    .status .size { width: 10px; height: 10px; }
  `;

  private action(a: Action) {
    if (a.kind === "rule") return html`<div class="rule"></div>`;
    if (a.kind === "bar") return html`<div class="bar"><h3>${a.text}</h3><button aria-label="Collapse">${chevron(UP)}</button></div>`;
    if (a.kind === "head") return html`<h3 class="act head2"><span class="slot"></span>${a.text}</h3>`;
    const slot = html`<span class="slot">${a.icon ? icon(a.icon) : nothing}</span>`;
    if (a.kind === "off") return html`<span class="act off">${slot}${a.text}</span>`;
    return html`<a class="act" href="#">${slot}${a.text}${a.marked ? html`<span class="ring"></span>` : nothing}</a>`;
  }

  private node(n: (typeof tree)[number]) {
    return html`<li class="node lvl${n.level} ${n.marked ? "marked" : ""}">
      <svg class="twist" viewBox="0 0 8 8">${n.arrow === "open" ? svg`<path d="M7 1v6H1z" fill="#404040"/>` : n.arrow === "closed" ? svg`<path d="M2 0l4 4-4 4z" fill="#fff" stroke="#666"/>` : nothing}</svg>
      <span class="dots"></span>${icon(n.icon)}<a href="#">${n.text}</a>${n.marked ? html`<span class="ring"></span>` : nothing}
    </li>`;
  }

  render() {
    return html`
      <svg class="defs" aria-hidden="true"><defs>
        <radialGradient id="sea" cx=".4" cy=".3" r=".75"><stop offset="0" stop-color="#7cc6f5"/><stop offset=".5" stop-color="#2a72d4"/><stop offset="1" stop-color="#12327e"/></radialGradient>
        <linearGradient id="brass"><stop offset="0" stop-color="#c08a26"/><stop offset=".4" stop-color="#f3da8c"/><stop offset="1" stop-color="#b47e20"/></linearGradient>
        <linearGradient id="gold"><stop offset="0" stop-color="#f2ab22"/><stop offset=".35" stop-color="#ffe07c"/><stop offset="1" stop-color="#ee9d14"/></linearGradient>
        <linearGradient id="paper" x2="1" y2="1"><stop offset="0" stop-color="#fff"/><stop offset="1" stop-color="#eceef0"/></linearGradient>
        <linearGradient id="steel" x2="1" y2="1"><stop offset="0" stop-color="#eaf0f8"/><stop offset="1" stop-color="#a9bad4"/></linearGradient>
        <linearGradient id="azure"><stop offset="0" stop-color="#7fd0f7"/><stop offset="1" stop-color="#1c8fd8"/></linearGradient>
      </defs></svg>
      <div class="shell">
        <svg class="behind" viewBox="0 0 240 2" aria-hidden="true"><path d="M131 0h7v2h-7z" fill="#c9d8df"/><path d="M130 0h1v2h-1z" fill="#556"/><path d="M150 0h4v2h-4zM222 0h3v2h-3zM227 0h3v2h-3z" fill="#e03030"/><path d="M214 1h3v1h-3z" fill="#aaa"/></svg>
        <div class="window">
        <header class="title">
          ${icon("iis")}
          <h1>Internet Information Services (IIS) Manager</h1>
          <div class="controls">
            <button aria-label="Minimize"><svg width="10" height="10"><path d="M0 8h10" stroke="#000" stroke-width="3"/></svg></button>
            <button aria-label="Maximize"><svg width="10" height="8"><rect x="1" y="1" width="8" height="6" fill="none" stroke="#000" stroke-width="2"/></svg></button>
            <button class="close" aria-label="Close"><svg width="9" height="8"><path d="M1 0l7 8M8 0L1 8" stroke="#000" stroke-width="2.500"/></svg></button>
          </div>
        </header>
        <div class="client">
          <div class="address">
            <svg class="navs" viewBox="0 0 54 26">
              <path d="M1 14Q1 0 13 2q14 4 28 0 12-1 12 12-1 11-12 11-8 0-9-8-5-3-10 0-1 8-9 8Q1 25 1 14z" fill="#9fb5d2"/>
              <path d="M0 13Q1-1 14 1q13 4 28 0 11-1 12 11" fill="none" stroke="#7e96b8"/>
              <g fill="#b3c4da" stroke="#7f8894" stroke-width="1.500"><circle cx="12" cy="14" r="9.500"/></g>
              <circle cx="44" cy="14" r="9" fill="none" stroke="#94a5bc"/>
              <path d="M18 14H8M12 9.500L7 14l5 4.500" fill="none" stroke="#6f7883" stroke-width="2"/>
              <path d="M39 12h5V9l5 5-5 5v-3h-5z" fill="none" stroke="#97a8be"/>
            </svg>
            <nav class="crumbs">${icon("siteglobe")}<i class="tri"></i><a href="#">ALFA2017TO2018</a><i class="tri"></i><a href="#">Sites</a><i class="tri"></i><a href="#">Default Web Site</a><i class="tri"></i></nav>
            <div class="tools">
              <button aria-label="Refresh">${icon("refresh")}</button><button aria-label="Stop loading">${icon("stopload")}</button><button aria-label="Home">${icon("home")}</button>
              <span class="sep"></span><button class="drop" aria-label="Help">${icon("help")}<i class="caret"></i></button>
            </div>
          </div>
          <div class="menu"><button>File</button><button>View</button><button>Help</button></div>
          <div class="main">
            <section class="panel">
              <h2 class="head">Connections</h2>
              <div class="tbar">
                <button class="split" aria-label="Connect">${icon("connect")}<i class="caret"></i></button>
                <button aria-label="Save">${icon("save")}</button><span class="sep"></span>
                <button aria-label="Up">${icon("upfolder")}</button><span class="sep"></span>
                <button aria-label="Disconnect">${icon("disconnect")}</button>
              </div>
              <ul class="tree">${tree.map((n) => this.node(n))}</ul>
              <div class="hscroll"><button aria-label="Scroll left">${chevron(LEFT)}</button><button class="thumb" aria-label="Scroll thumb"><i class="grip side"></i></button><span class="gap"></span><button aria-label="Scroll right">${chevron(RIGHT)}</button></div>
            </section>
            <section class="centre">
              <div class="home">
                <div class="banner">
                  <svg viewBox="0 0 32 35"><ellipse cx="16" cy="31" rx="12" ry="3" fill="#000" opacity=".25"/>${globe(1, 1, 30)}</svg>
                  <h2>Default Web Site Home</h2>
                </div>
                <div class="filter">
                  <label for="filter">Filter:</label><input id="filter" type="text"><button aria-label="Filter history"><i class="caret"></i></button>
                  <button class="go">${icon("funnel")}Go</button><i class="caret off pre"></i>
                  <button class="all">${icon("showall")}Show All</button><span class="sep pre"></span><span>Group by:</span>
                  <button class="more" aria-label="More"><i></i><span class="caret"></span></button>
                </div>
                <div class="listbox">
                  <div class="list">
                    ${groups.map((g) => html`<h3 class="group">${g.title}<i></i>${chevron(UP)}</h3>
                      <div class="grid">${g.items.map(([k, ...t]) => html`<a href="#"><svg viewBox="0 0 32 32" aria-hidden="true">${features[k]}</svg>${t.map((s) => html`<span>${s}</span>`)}</a>`)}</div>`)}
                  </div>
                  <div class="vscroll"><button aria-label="Scroll up">${chevron(UP)}</button><button class="thumb" aria-label="Scroll thumb"><i class="grip"></i></button><span class="gap"></span><button aria-label="Scroll down">${chevron(DOWN)}</button></div>
                </div>
              </div>
              <div class="tabs"><button class="on">${icon("features")}Features View</button><button>${icon("content")}Content View</button></div>
            </section>
            <section class="panel">
              <h2 class="head">Actions</h2>
              <div class="actions">${actions.map((a) => this.action(a))}</div>
            </section>
          </div>
          <footer class="status">Ready<span>${icon("host")}<svg class="size" viewBox="0 0 10 10"><path d="M8 1h2M8 5h2M4 5h2M8 9h2M4 9h2M0 9h2" stroke="#999" stroke-width="2"/></svg></span></footer>
        </div>
      </div></div>`;
  }
}
